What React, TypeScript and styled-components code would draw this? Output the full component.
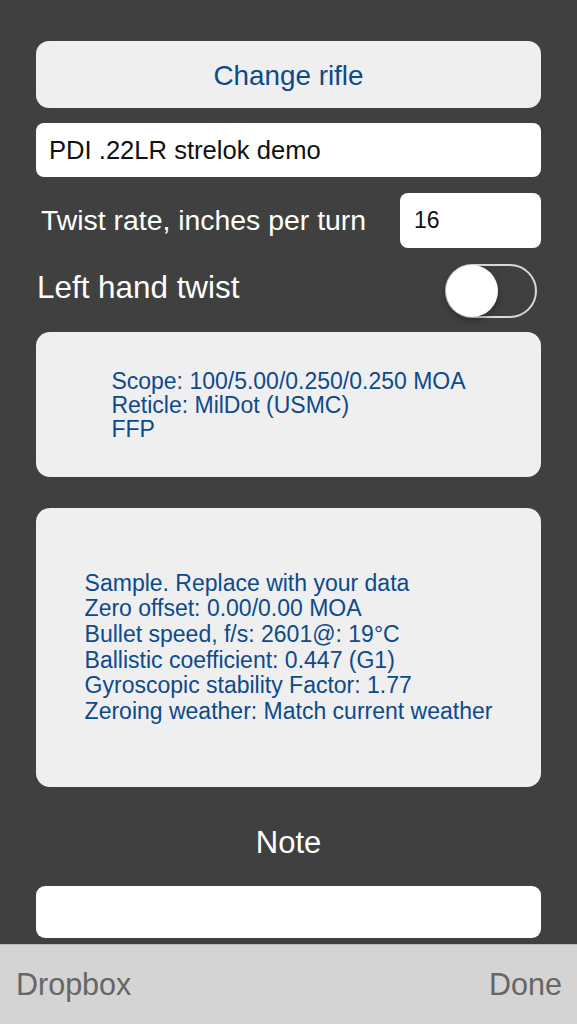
import styled, { createGlobalStyle } from "styled-components";

const GlobalStyle = createGlobalStyle`
  html, body {
    margin: 0;
    padding: 0;
    background: #404040;
  }
  body {
    font-family: "Liberation Sans", Arial, sans-serif;
  }
`;

const Screen = styled.div`
  width: 577px;
  height: 1024px;
  display: flex;
  flex-direction: column;
  background: #404040;
  overflow: hidden;
`;

const Content = styled.div`
  flex: 1;
  padding: 41px 36px 0 36px;
  display: flex;
  flex-direction: column;
`;

const ChangeButton = styled.div`
  height: 67px;
  border-radius: 13px;
  background: #efefef;
  display: flex;
  align-items: center;
  justify-content: center;
  font-size: 27.8px;
  color: #0c4a8c;
  padding-top: 2px;
  box-sizing: border-box;
`;

const Field = styled.div<{ $height: number; $mt: number }>`
  height: ${({ $height }) => $height}px;
  margin-top: ${({ $mt }) => $mt}px;
  background: #fff;
  border-radius: 8px;
  display: flex;
  align-items: center;
  padding-left: 13px;
  font-size: 25.6px;
  color: #111;
  box-sizing: border-box;
`;

const Row = styled.div<{ $mt: number }>`
  display: flex;
  align-items: center;
  justify-content: space-between;
  margin-top: ${({ $mt }) => $mt}px;
`;

const Label = styled.span<{ $size: number; $indent: number; $lift: number }>`
  font-size: ${({ $size }) => $size}px;
  color: #fff;
  padding-left: ${({ $indent }) => $indent}px;
  margin-bottom: ${({ $lift }) => $lift}px;
`;

const SmallInput = styled.div`
  width: 141px;
  height: 55px;
  background: #fff;
  border-radius: 8px;
  display: flex;
  align-items: center;
  padding-left: 14px;
  font-size: 23px;
  color: #111;
  box-sizing: border-box;
`;

const Toggle = styled.div`
  position: relative;
  width: 92px;
  height: 54px;
  border-radius: 27px;
  border: 2px solid #d9d9d9;
  box-sizing: border-box;
  margin-right: 4px;
`;

const Knob = styled.div`
  position: absolute;
  left: -1px;
  top: -1px;
  width: 52px;
  height: 52px;
  border-radius: 50%;
  background: #fff;
  box-shadow: 0 3px 6px rgba(0, 0, 0, 0.35);
`;

const InfoBox = styled.div<{ $height: number; $mt: number }>`
  height: ${({ $height }) => $height}px;
  margin-top: ${({ $mt }) => $mt}px;
  background: #efefef;
  border-radius: 14px;
  display: flex;
  align-items: center;
  justify-content: center;
`;

const InfoText = styled.div<{ $lh: number }>`
  font-size: 23px;
  line-height: ${({ $lh }) => $lh}px;
  color: #0c4a8c;
  white-space: nowrap;
`;

const NoteLabel = styled.div`
  margin-top: 38px;
  text-align: center;
  font-size: 31px;
  line-height: 36px;
  color: #fff;
`;

const NoteField = styled.div`
  height: 52px;
  margin-top: 25px;
  background: #fff;
  border-radius: 9px;
`;

const BottomBar = styled.div`
  height: 80px;
  flex-shrink: 0;
  background: #d4d4d4;
  border-top: 1px solid #b9b9b9;
  box-sizing: border-box;
  display: flex;
  align-items: center;
  justify-content: space-between;
  padding: 0 15px 0 16px;
  font-size: 30.5px;
  color: #666;
`;

const App = () => {
  return (
    <Screen>
      <GlobalStyle />
      <Content>
        <ChangeButton>Change rifle</ChangeButton>
        <Field $height={54} $mt={15}>
          PDI .22LR strelok demo
        </Field>
        <Row $mt={16}>
          <Label $size={28.4} $indent={5} $lift={0}>
            Twist rate, inches per turn
          </Label>
          <SmallInput>16</SmallInput>
        </Row>
        <Row $mt={16}>
          <Label $size={31.4} $indent={1} $lift={6}>
            Left hand twist
          </Label>
          <Toggle>
            <Knob />
          </Toggle>
        </Row>
        <InfoBox $height={145} $mt={14}>
          <InfoText $lh={24}>
            <div>Scope: 100/5.00/0.250/0.250 MOA</div>
            <div>Reticle: MilDot (USMC)</div>
            <div>FFP</div>
          </InfoText>
        </InfoBox>
        <InfoBox $height={279} $mt={31}>
          <InfoText $lh={25.6}>
            <div>Sample. Replace with your data</div>
            <div>Zero offset: 0.00/0.00 MOA</div>
            <div>Bullet speed, f/s: 2601@: 19°C</div>
            <div>Ballistic coefficient: 0.447 (G1)</div>
            <div>Gyroscopic stability Factor: 1.77</div>
            <div>Zeroing weather: Match current weather</div>
          </InfoText>
        </InfoBox>
        <NoteLabel>Note</NoteLabel>
        <NoteField />
      </Content>
      <BottomBar>
        <span>Dropbox</span>
        <span>Done</span>
      </BottomBar>
    </Screen>
  );
};

export default App;
